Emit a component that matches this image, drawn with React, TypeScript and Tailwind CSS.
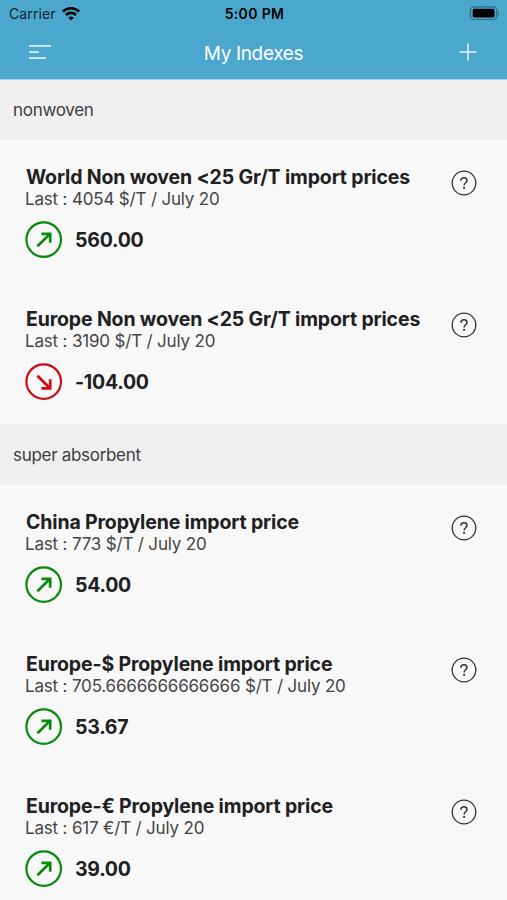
type Index = {
  name: string;
  last: string;
  value: string;
  down?: boolean;
};

type Group = {
  title: string;
  items: Index[];
};

const groups: Group[] = [
  {
    title: 'nonwoven',
    items: [
      { name: 'World Non woven <25 Gr/T import prices', last: '4054 $/T / July 20', value: '560.00' },
      { name: 'Europe Non woven <25 Gr/T import prices', last: '3190 $/T / July 20', value: '-104.00', down: true },
    ],
  },
  {
    title: 'super absorbent',
    items: [
      { name: 'China Propylene import price', last: '773 $/T / July 20', value: '54.00' },
      { name: 'Europe-$ Propylene import price', last: '705.6666666666666 $/T / July 20', value: '53.67' },
      { name: 'Europe-€ Propylene import price', last: '617 €/T / July 20', value: '39.00' },
    ],
  },
];

function WifiIcon() {
  return (
    <svg width="18" height="14" viewBox="0 0 18 14" fill="none" stroke="#000" strokeWidth="2.7">
      <path d="M0.9 4.6a11.5 11.5 0 0 1 16.2 0" />
      <path d="M3.9 8a7.3 7.3 0 0 1 10.2 0" />
      <path d="M9 13.4 6.3 10.7a3.9 3.9 0 0 1 5.4 0Z" fill="#000" stroke="none" />
    </svg>
  );
}

function BatteryIcon() {
  return (
    <svg width="31" height="15" viewBox="0 0 31 15">
      <rect x="1.4" y="0.9" width="26.2" height="12.6" rx="3.6" fill="none" stroke="#2f6b84" strokeWidth="1.2" />
      <rect x="3.7" y="2.8" width="21.8" height="8.8" rx="1.6" fill="#000" />
      <path d="M28.8 5c1.6.5 1.6 4 0 4.5Z" fill="#2f6b84" />
    </svg>
  );
}

function TrendIcon({ down }: { down?: boolean }) {
  return (
    <svg width="38" height="38" viewBox="0 0 38 38" fill="none" stroke={down ? '#cb0c12' : '#0a8a0d'}>
      <circle cx="18.7" cy="18.6" r="17.3" strokeWidth="2.2" />
      {down ? (
        <path d="M12.4 12.8 25 25.2M16.4 25.4H25.2V16.2" strokeWidth="2.7" />
      ) : (
        <path d="M12.4 25.3 25 12.9M16.4 12.8H25.2V21.8" strokeWidth="2.7" />
      )}
    </svg>
  );
}

function HelpIcon() {
  return (
    <svg width="26" height="26" viewBox="0 0 26 26" fill="none" stroke="#333">
      <circle cx="13" cy="13" r="11.8" strokeWidth="1.3" />
      <path d="M9.9 10.7c0-1.9 1.3-3 3.1-3s3 1.1 3 2.7c0 2.4-2.9 2.4-2.9 5.1" strokeWidth="1.5" />
      <circle cx="13.1" cy="17.9" r="1.05" fill="#333" stroke="none" />
    </svg>
  );
}

function Header() {
  return (
    <header className="relative z-10 -mb-px h-20 border-b border-[#a8d4e5] bg-[#4ba7cd]">
      <div className="grid h-[27px] grid-cols-3 items-center pr-[7px] pl-[9px] text-[14px] text-black">
        <div className="flex items-center gap-[6px]">
          <span className="tracking-[0.1px] text-[#10232b]">Carrier</span>
          <WifiIcon />
        </div>
        <span className="text-center font-semibold tracking-[0.35px] whitespace-nowrap">5:00 PM</span>
        <div className="flex justify-end">
          <BatteryIcon />
        </div>
      </div>
      <div className="grid h-[51px] grid-cols-3 items-center pr-[30px] pl-[29px] text-white">
        <svg width="22" height="16" viewBox="0 0 22 16" stroke="#d6f1fa" strokeWidth="1.7">
          <path d="M0 0.9H22M0 7.1H10M0 13.2H17" />
        </svg>
        <h1 className="pt-1 pl-px text-center text-[19px] tracking-[-0.35px] whitespace-nowrap">My Indexes</h1>
        <svg className="mb-0.5 justify-self-end" width="18" height="18" viewBox="0 0 18 18" stroke="#e4f6fc" strokeWidth="1.5">
          <path d="M0.5 9H17.5M9 0.5V17.5" />
        </svg>
      </div>
    </header>
  );
}

function IndexRow({ item }: { item: Index }) {
  return (
    <li className="flex h-[142px] justify-between pt-[25px] pr-[30px] pl-[25px]">
      <div className="flex flex-col">
        <h3 className="pl-px text-[19.5px] leading-6 font-bold tracking-[-0.15px] whitespace-nowrap text-[#202022]">
          {item.name}
        </h3>
        <p className="text-[17px] leading-5 tracking-[-0.18px] whitespace-nowrap text-[#454547]">Last : {item.last}</p>
        <div className="mt-3 flex items-center gap-3">
          <TrendIcon down={item.down} />
          <span className="pt-0.5 text-[19.5px] font-bold tracking-[-0.25px] text-[#202022]">{item.value}</span>
        </div>
      </div>
      <div className="mt-[5px]">
        <HelpIcon />
      </div>
    </li>
  );
}

export default function App() {
  return (
    <div className="h-[900px] w-full overflow-hidden bg-[#f8f8f8] font-['Inter','Liberation_Sans',sans-serif]">
      <Header />
      {groups.map((group) => (
        <section key={group.title}>
          <h2 className="flex h-[61px] items-center bg-[#f0f0f0] pt-0.5 pl-[13px] text-[17px] tracking-[-0.3px] text-[#3c3c3e]">
            {group.title}
          </h2>
          <ul>
            {group.items.map((item) => (
              <IndexRow key={item.name} item={item} />
            ))}
          </ul>
        </section>
      ))}
    </div>
  );
}
